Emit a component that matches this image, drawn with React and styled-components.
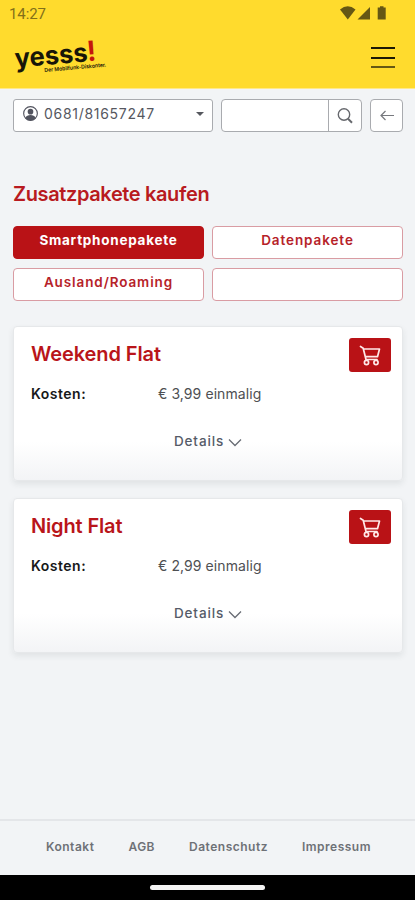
import React from 'react'
import styled, { createGlobalStyle } from 'styled-components'

const GlobalStyle = createGlobalStyle`
    * {
        box-sizing: border-box;
    }
    body {
        margin: 0;
        background: #f2f4f6;
        font-family: Inter, 'Liberation Sans', sans-serif;
    }
    button, input {
        font-family: inherit;
        margin: 0;
    }
`

const Page = styled.div`
    height: 900px;
    width: 415px;
    display: flex;
    flex-direction: column;
    overflow: hidden;
    background: #f2f4f6;
`

const Header = styled.header`
    height: 89px;
    flex: none;
    background: #ffdb2d;
    border-bottom: 1px solid #ffe98a;
`

const StatusBar = styled.div`
    height: 28px;
    display: flex;
    justify-content: space-between;
    padding: 5px 27px 0 9px;
`

const Clock = styled.span`
    font-family: Roboto, sans-serif;
    font-size: 15px;
    line-height: 18px;
    letter-spacing: -0.1px;
    color: #837019;
`

const NavBar = styled.div`
    height: 60px;
    display: flex;
    justify-content: space-between;
    padding: 0 20px 0 14px;
`

const LogoImage = styled.svg`
    overflow: visible;
`

const MenuButton = styled.button`
    height: 21px;
    width: 24px;
    margin-top: 19px;
    padding: 0;
    border: 0;
    background: transparent;
    display: flex;
    flex-direction: column;
    justify-content: space-between;
`

const MenuLine = styled.span`
    height: 2px;
    width: 100%;
    background: ${({ $color }) => $color || '#1c1805'};
`

const Main = styled.main`
    flex: 1;
    padding: 10px 12px 0 13px;
`

const Toolbar = styled.div`
    display: flex;
    gap: 8px;
    height: 33px;
`

const NumberSelect = styled.button`
    width: 200px;
    height: 33px;
    display: flex;
    align-items: center;
    padding: 0 8px 4px 9px;
    border: 1px solid #a9abaf;
    border-radius: 3px;
    background: #fff;
    color: #56585f;
    font-size: 14px;
    letter-spacing: 0.7px;
`

const Number = styled.span`
    flex: 1;
    margin-left: 6px;
    text-align: left;
`

const Caret = styled.span`
    border: 4px solid transparent;
    border-top-color: #56585f;
    border-bottom: 0;
`

const Search = styled.div`
    width: 141px;
    display: flex;
    border: 1px solid #a9abaf;
    border-radius: 4px;
    background: #fff;
`

const SearchInput = styled.input`
    flex: 1;
    min-width: 0;
    border: 0;
    background: transparent;
`

const SearchButton = styled.button`
    width: 33px;
    padding: 0;
    border: 0;
    border-left: 1px solid #a9abaf;
    background: transparent;
    display: flex;
    align-items: center;
    justify-content: center;
`

const BackButton = styled.button`
    width: 33px;
    padding: 0;
    border: 1px solid #a9abaf;
    border-radius: 4px;
    background: #fff;
    display: flex;
    align-items: center;
    justify-content: center;
`

const Title = styled.h1`
    margin: 50px 0 0;
    font-size: 20px;
    line-height: 24px;
    font-weight: 600;
    letter-spacing: -0.37px;
    color: #b81a20;
`

const Tabs = styled.div`
    display: grid;
    grid-template-columns: 191px 191px;
    grid-auto-rows: 33px;
    gap: 9px 8px;
    margin-top: 20px;
`

const Tab = styled.button`
    padding: 0 0 5px;
    border: 1px solid ${({ $active }) => ($active ? '#b91216' : '#d99ca3')};
    border-radius: 4px;
    background: ${({ $active }) => ($active ? '#b91216' : '#fff')};
    color: ${({ $active }) => ($active ? '#fff' : '#b62229')};
    font-size: 13.5px;
    font-weight: ${({ $active }) => ($active ? 700 : 600)};
    letter-spacing: ${({ $spacing }) => $spacing}px;
`

const Packages = styled.div`
    display: flex;
    flex-direction: column;
    gap: 17px;
    margin-top: 25px;
`

const Card = styled.section`
    height: 155px;
    padding: 11px 11px 0 17px;
    border: 1px solid #e6e8ea;
    border-radius: 4px;
    background: linear-gradient(#fff 75%, #f3f4f6);
    box-shadow: 0 3px 6px rgba(40, 50, 60, 0.09);
`

const CardHead = styled.div`
    display: flex;
    justify-content: space-between;
`

const CardTitle = styled.h2`
    margin: 4px 0 0;
    font-size: 20px;
    line-height: 24px;
    font-weight: 600;
    letter-spacing: ${({ $spacing }) => $spacing}px;
    color: #b9151a;
`

const CartButton = styled.button`
    width: 42px;
    height: 34px;
    padding: 1px 0 0;
    border: 0;
    border-radius: 3px;
    background: #b91216;
    display: flex;
    align-items: center;
    justify-content: center;
`

const Cost = styled.div`
    display: flex;
    margin-top: 13px;
    font-size: 14px;
    line-height: 18px;
`

const CostLabel = styled.span`
    width: 127px;
    font-weight: 600;
    letter-spacing: 0.5px;
    color: #17181a;
`

const CostValue = styled.span`
    color: #4e5053;
    letter-spacing: 0.08px;
`

const Details = styled.button`
    display: flex;
    align-items: center;
    margin: 29px 0 0 143px;
    padding: 0;
    border: 0;
    background: transparent;
    color: #555b68;
    font-size: 13.5px;
    line-height: 18px;
    font-weight: 500;
    letter-spacing: 0.85px;
    gap: 4px;

    svg {
        margin-top: 3px;
    }
`

const Footer = styled.footer`
    height: 56px;
    flex: none;
    display: flex;
    justify-content: space-between;
    padding: 17px 44px 0 46px;
    border-top: 2px solid #e4e6e9;
`

const FooterLink = styled.a`
    font-size: 12px;
    line-height: 18px;
    font-weight: 600;
    letter-spacing: 0.5px;
    color: #6e7176;
`

const GestureBar = styled.div`
    height: 25px;
    flex: none;
    display: flex;
    justify-content: center;
    padding-top: 10px;
    background: #000;
`

const GestureHandle = styled.span`
    width: 115px;
    height: 5px;
    border-radius: 3px;
    background: #f5f5f5;
`

const StatusIcons = () => (
  <svg width="48" height="15" viewBox="0 0 48 15" fill="#655714">
    <path d="M0 4.500Q7.700 -2 15.500 4.500L7.800 14.500Z" />
    <path d="M30 2V14.500H17.500Z" />
    <path d="M40 1.200h3.500v1.300h2.200v12h-8V2.500H40Z" />
  </svg>
)

const Logo = () => (
  <LogoImage width="110" height="56" viewBox="0 0 110 56">
    <g transform="rotate(-5 2 40)" fontFamily="Inter, sans-serif" fontWeight="700">
      <text x="1.500" y="39.500" fontSize="26" textLength="73" lengthAdjust="spacingAndGlyphs" fill="#171508">yesss</text>
      <text x="74" y="39.500" fontSize="28" textLength="9" lengthAdjust="spacingAndGlyphs" fill="#c5160c">!</text>
      <text x="30" y="46.500" fontSize="5.500" fontWeight="600" textLength="62" lengthAdjust="spacingAndGlyphs" fill="#171508">Der Mobilfunk-Diskonter.</text>
    </g>
  </LogoImage>
)

const UserIcon = () => (
  <svg width="15" height="15" viewBox="0 0 16 16" fill="#51535e">
    <circle cx="8" cy="8" r="7.300" fill="none" stroke="#51535e" strokeWidth="1.200" />
    <circle cx="8" cy="6" r="3" />
    <path d="M2.500 13c1-2.500 3-3.300 5.500-3.300s4.500.8 5.500 3.300A7.300 7.300 0 0 1 2.500 13Z" />
  </svg>
)

const SearchIcon = () => (
  <svg width="16" height="16" viewBox="0 0 16 16" fill="none" stroke="#66686d">
    <circle cx="7" cy="6.500" r="5.700" strokeWidth="1.400" />
    <path d="M11 10.700L15 14.800" strokeWidth="2" />
  </svg>
)

const BackIcon = () => (
  <svg width="14" height="12" viewBox="0 0 14 12" fill="none" stroke="#77797e" strokeWidth="1.200">
    <path d="M14 5.500H1M5.500 1L1 5.500l4.500 4.500" />
  </svg>
)

const CartIcon = () => (
  <svg width="22" height="22" viewBox="0 0 22 22" fill="none" stroke="#ffe9e9" strokeWidth="1.700" strokeLinejoin="round" strokeLinecap="round">
    <path d="M1.500 1.500l2.700 1.700L7 14.500H18M4.500 4H20.500L18.500 11.700H6.500" />
    <circle cx="7.500" cy="17.500" r="2.100" />
    <circle cx="17" cy="17.500" r="2.100" />
  </svg>
)

const ChevronIcon = () => (
  <svg width="14" height="9" viewBox="0 0 14 9" fill="none" stroke="#686c74" strokeWidth="1.300">
    <path d="M1 1.500l6 6L13 1.500" />
  </svg>
)

const tabs = [
  { label: 'Smartphonepakete', active: true, spacing: 0.75 },
  { label: 'Datenpakete', spacing: 0.9 },
  { label: 'Ausland/Roaming', spacing: 0.9 },
  { label: '' },
]

const packages = [
  { name: 'Weekend Flat', price: '€ 3,99 einmalig', spacing: -0.1 },
  { name: 'Night Flat', price: '€ 2,99 einmalig', spacing: -0.15 },
]

const App = () => {
  return (
    <>
      <GlobalStyle />
      <Page>
        <Header>
          <StatusBar>
            <Clock>14:27</Clock>
            <StatusIcons />
          </StatusBar>
          <NavBar>
            <Logo />
            <MenuButton aria-label="Menü">
              <MenuLine />
              <MenuLine />
              <MenuLine $color="#665813" />
            </MenuButton>
          </NavBar>
        </Header>
        <Main>
          <Toolbar>
            <NumberSelect>
              <UserIcon />
              <Number>0681/81657247</Number>
              <Caret />
            </NumberSelect>
            <Search>
              <SearchInput />
              <SearchButton aria-label="Suchen"><SearchIcon /></SearchButton>
            </Search>
            <BackButton aria-label="Zurück"><BackIcon /></BackButton>
          </Toolbar>
          <Title>Zusatzpakete kaufen</Title>
          <Tabs>
            {tabs.map(({ label, active, spacing }) => (
              <Tab key={label} $active={active} $spacing={spacing || 0}>{label}</Tab>
            ))}
          </Tabs>
          <Packages>
            {packages.map(({ name, price, spacing }) => (
              <Card key={name}>
                <CardHead>
                  <CardTitle $spacing={spacing}>{name}</CardTitle>
                  <CartButton aria-label="In den Warenkorb"><CartIcon /></CartButton>
                </CardHead>
                <Cost>
                  <CostLabel>Kosten:</CostLabel>
                  <CostValue>{price}</CostValue>
                </Cost>
                <Details>
                  Details
                  <ChevronIcon />
                </Details>
              </Card>
            ))}
          </Packages>
        </Main>
        <Footer>
          <FooterLink>Kontakt</FooterLink>
          <FooterLink>AGB</FooterLink>
          <FooterLink>Datenschutz</FooterLink>
          <FooterLink>Impressum</FooterLink>
        </Footer>
        <GestureBar>
          <GestureHandle />
        </GestureBar>
      </Page>
    </>
  )
}

export default App;
